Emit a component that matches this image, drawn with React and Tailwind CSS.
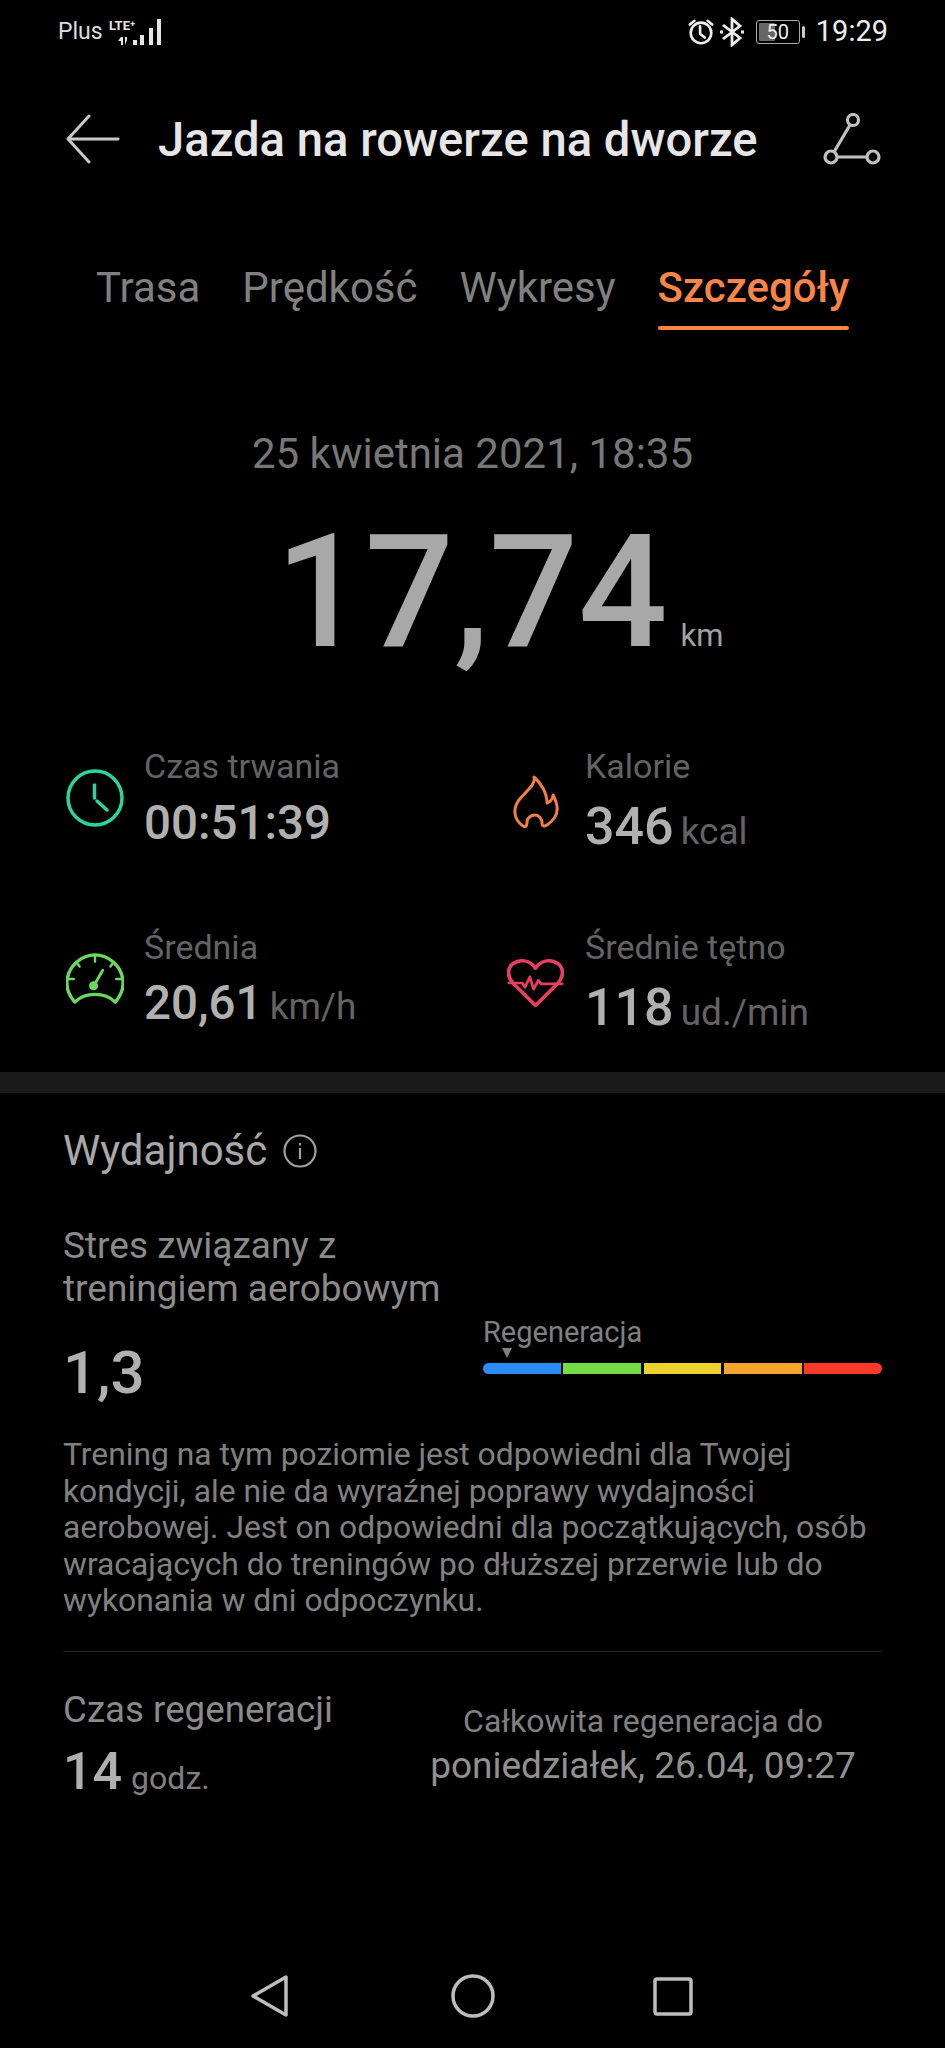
const F = { fontFamily: 'Roboto, "Noto Sans", sans-serif' };

function Stat({ icon, iconClass, label, value, unit, valueClass, numClass }) {
  return (
    <div className="flex items-start h-[120px]">
      <div className={`w-[81px] shrink-0 ${iconClass}`}>{icon}</div>
      <div className="flex flex-col">
        <div className="text-[34px] leading-[40px] text-[#636363]">{label}</div>
        <div className={`flex items-baseline leading-[60px] ${valueClass}`}>
          <span className={`font-medium text-[#b0b0b0] ${numClass}`}>{value}</span>
          {unit && <span className="ml-[7px] text-[37px] text-[#636363]">{unit}</span>}
        </div>
      </div>
    </div>
  );
}

const Clock = () => (
  <svg width="58" height="58" viewBox="0 0 58 58" fill="none" stroke="#2cd3a0" strokeWidth="3.5" strokeLinecap="round">
    <circle cx="29" cy="29" r="27" />
    <path d="M28.5 16V29M31 32L41 41" />
  </svg>
);
const Flame = () => (
  <svg width="47" height="54" viewBox="0 0 47 54" fill="none" stroke="#ee7f45" strokeWidth="3" strokeLinejoin="round" strokeLinecap="round">
    <path d="M22 2C24 10 14 16 7 25C1 33 1 44 11 51C14 53 15 50 15 47C15 43 19 40 23 40C27 40 30 44 30 48C30 51 32 52 35 50C44 44 47 36 44 27C43 24 42 22 41 20C41 24 38 27 35 28C35 18 29 8 22 2Z" />
  </svg>
);
const Gauge = () => (
  <svg width="58" height="52" viewBox="0 0 60 54" fill="none" stroke="#6ad85e" strokeWidth="3.5" strokeLinecap="round" strokeLinejoin="round">
    <path d="M9 52C2 44 0 37 1 29C3 14 16 3 30 3C44 3 57 14 59 29C60 37 58 44 51 52C46 47 38 44 30 44C22 44 14 47 9 52Z" />
    <path d="M30 4V10M3 28H8M57 28H52M11 11L14 15M49 11L46 15" strokeWidth="2.5" />
    <path d="M38 19L30 33" strokeWidth="3" />
    <circle cx="28.5" cy="35" r="3" fill="#6ad85e" />
  </svg>
);
const Heart = () => (
  <svg width="57" height="52" viewBox="0 0 60 60" preserveAspectRatio="none" fill="none" stroke="#e63e62" strokeWidth="4" strokeLinejoin="round" strokeLinecap="round">
    <path d="M30 56L7 31C0 23 0 13 6 8C13 2 24 3 30 13C36 3 47 2 54 8C60 13 60 23 53 31Z" />
    <path d="M2 30H16L19 35L24 23L28 37L33 27L36 31H58" strokeWidth="3" />
  </svg>
);

export default function App() {
  return (
    <div style={F} className="w-[945px] h-[2048px] bg-black flex flex-col overflow-hidden">
      {/* status bar */}
      <div className="h-[64px] shrink-0 flex items-center justify-between pl-[58px] pr-[57px] text-white">
        <div className="flex items-center">
          <span className="text-[23px] text-[#dddddd]">Plus</span>
          <svg width="60" height="35" viewBox="0 0 60 35" className="ml-[2px]" fill="#e4e4e4">
            <text x="4" y="15" fontSize="13" fontWeight="700" fill="#e4e4e4" style={{ fontFamily: 'Roboto, sans-serif' }}>LTE⁺</text>
            <path d="M16 22h2v8h-2zM13 26l3-4v4zM20 30v-8h2v3zM28 25h4v5h-4zM35 20h4v10h-4zM44 13h4v17h-4zM52 4h4v26h-4z" />
          </svg>
        </div>
        <div className="flex items-center">
          <svg width="28" height="30" viewBox="0 0 30 30" fill="none" stroke="#eeeeee" strokeWidth="2.8" strokeLinecap="round">
            <circle cx="15" cy="16" r="11" />
            <path d="M14 9V17L19 21M3 7L8 3M27 7L22 3" />
          </svg>
          <svg width="24" height="30" viewBox="0 0 24 30" className="ml-[5px]" fill="none" stroke="#eeeeee" strokeWidth="2.8">
            <path d="M3 8L20 21L12 28V2L20 9L3 22" />
            <path d="M0 15H3M21 15H24" />
          </svg>
          <div className="ml-[12px] relative w-[44px] h-[24px] rounded-[3px] border border-[#aaaaaa] flex items-center justify-center overflow-hidden">
            <div className="absolute left-[2px] top-[2px] bottom-[2px] w-[16px] bg-[#666666] rounded-[1px]" />
            <span className="relative text-[20px] leading-none text-[#eeeeee]">50</span>
          </div>
          <div className="ml-[2px] w-[3px] h-[12px] bg-[#cccccc] rounded-full" />
          <span className="ml-[11px] text-[29px] text-[#eeeeee]">19:29</span>
        </div>
      </div>

      {/* header */}
      <div className="h-[94px] mt-[28px] shrink-0 flex items-center pl-[66px] pr-[64px]">
        <svg width="54" height="50" viewBox="0 0 54 50" fill="none" stroke="#c8c8c8" strokeWidth="3" strokeLinecap="round" strokeLinejoin="round">
          <path d="M23 2L2 25L23 48M2 25H52" />
        </svg>
        <h1 className="ml-[38px] mt-[3px] text-[47.2px] font-medium text-[#e6e6e6] whitespace-nowrap">Jazda na rowerze na dworze</h1>
        <svg width="58" height="52" viewBox="0 0 58 52" className="ml-auto" fill="none" stroke="#c0c0c0" strokeWidth="3.2">
          <circle cx="30" cy="7" r="5.5" />
          <circle cx="8" cy="44" r="6" />
          <circle cx="50" cy="44" r="6" />
          <path d="M27 12L11 39M14 44H44" />
        </svg>
      </div>

      {/* tabs */}
      <div className="mt-[70px] shrink-0 flex pl-[96px] gap-[42px] text-[42px] leading-[64px] text-[#808080]">
        <span>Trasa</span>
        <span>Prędkość</span>
        <span>Wykresy</span>
        <div className="flex flex-col">
          <span className="font-medium text-[#f58549]">Szczegóły</span>
          <div className="h-[4px] mt-[6px] rounded-full bg-[#f58549]" />
        </div>
      </div>

      {/* summary */}
      <div className="mt-[100px] shrink-0 text-center text-[42px] leading-[48px] text-[#777777]">25 kwietnia 2021, 18:35</div>
      <div className="mt-[28px] shrink-0 flex items-baseline justify-center h-[172px] pl-[54px] leading-[172px] text-[#a8a8a8]">
        <span className="text-[157px] font-medium">17,74</span>
        <span className="ml-[13px] text-[31px] text-[#a0a0a0]">km</span>
      </div>

      {/* stats */}
      <div className="mt-[68px] shrink-0 grid grid-cols-[441px_1fr] pl-[63px] gap-y-[61px]">
        <Stat icon={<Clock />} iconClass="pt-[23px] pl-[3px]" label="Czas trwania" value="00:51:39" valueClass="mt-[7px]" numClass="text-[47.5px]" />
        <Stat icon={<Flame />} iconClass="pt-[29px] pl-[8px]" label="Kalorie" value="346" unit="kcal" valueClass="mt-[11px]" numClass="text-[52px]" />
        <Stat icon={<Gauge />} iconClass="pt-[25px] pl-[3px]" label="Średnia" value="20,61" unit="km/h" valueClass="mt-[6px]" numClass="text-[47.5px]" />
        <Stat icon={<Heart />} iconClass="pt-[30px] pl-[3px]" label="Średnie tętno" value="118" unit="ud./min" valueClass="mt-[11px]" numClass="text-[52px]" />
      </div>

      <div className="mt-[25px] h-[21px] shrink-0 bg-[#1a1a1a]" />

      {/* performance */}
      <div className="px-[63px] shrink-0">
        <div className="mt-[33px] flex items-center">
          <span className="text-[42px] leading-[50px] text-[#a8a8a8]">Wydajność</span>
          <svg width="34" height="34" viewBox="0 0 34 34" className="ml-[16px]" fill="none" stroke="#a0a0a0" strokeWidth="2.2">
            <circle cx="17" cy="17" r="15.5" />
            <path d="M17 14V25M17 9V11.5" />
          </svg>
        </div>
        <div className="mt-[48px] flex">
          <div className="w-[420px] shrink-0">
            <div className="text-[37px] leading-[43px] text-[#8a8a8a] whitespace-nowrap">Stres związany z<br />treningiem aerobowym</div>
            <div className="mt-[29px] text-[60px] leading-[68px] font-medium text-[#b0b0b0]">1,3</div>
          </div>
          <div className="mt-[92px] w-[399px]">
            <div className="text-[29px] leading-[32px] text-[#808080]">Regeneracja</div>
            <div className="ml-[19px] w-0 h-0 border-x-[5px] border-x-transparent border-t-[10px] border-t-[#808080]" />
            <div className="mt-[5px] flex gap-[2.5px] h-[11px]">
              <div className="flex-1 rounded-l-full bg-[#2a8cf5]" />
              <div className="flex-1 bg-[#76dc45]" />
              <div className="flex-1 bg-[#ecd22c]" />
              <div className="flex-1 bg-[#f5a52e]" />
              <div className="flex-1 rounded-r-full bg-[#f93a26]" />
            </div>
          </div>
        </div>
        <p className="mt-[29px] text-[31.8px] leading-[36.5px] text-[#808080] whitespace-nowrap">
          Trening na tym poziomie jest odpowiedni dla Twojej<br />
          kondycji, ale nie da wyraźnej poprawy wydajności<br />
          aerobowej. Jest on odpowiedni dla początkujących, osób<br />
          wracających do treningów po dłuższej przerwie lub do<br />
          wykonania w dni odpoczynku.
        </p>
        <div className="mt-[32px] h-[1px] bg-[#262626]" />
        <div className="mt-[36px] flex">
          <div className="w-[341px] shrink-0">
            <div className="text-[36.7px] leading-[44px] text-[#8a8a8a] whitespace-nowrap">Czas regeneracji</div>
            <div className="flex items-baseline leading-[60px] mt-[10px]">
              <span className="text-[52px] font-medium text-[#b0b0b0]">14</span>
              <span className="ml-[9px] text-[32px] text-[#808080]">godz.</span>
            </div>
          </div>
          <div className="flex-1 text-center pt-[11px]">
            <div className="text-[32px] leading-[44px] text-[#808080] whitespace-nowrap">Całkowita regeneracja do</div>
            <div className="text-[37px] leading-[45px] text-[#909090] whitespace-nowrap">poniedziałek, 26.04, 09:27</div>
          </div>
        </div>
      </div>

      {/* nav bar */}
      <div className="mt-auto mb-[30px] shrink-0 flex justify-between pl-[250px] pr-[252px]">
        <svg width="42" height="44" viewBox="0 0 42 44" fill="none" stroke="#bdbdbd" strokeWidth="3.5" strokeLinejoin="round">
          <path d="M36 3V41L3 22Z" />
        </svg>
        <svg width="44" height="44" viewBox="0 0 44 44" fill="none" stroke="#bdbdbd" strokeWidth="3.5">
          <circle cx="22" cy="22" r="20" />
        </svg>
        <svg width="40" height="44" viewBox="0 0 40 44" fill="none" stroke="#bdbdbd" strokeWidth="3.5" strokeLinejoin="round">
          <rect x="2" y="5" width="36" height="35" rx="2" />
        </svg>
      </div>
    </div>
  );
}
